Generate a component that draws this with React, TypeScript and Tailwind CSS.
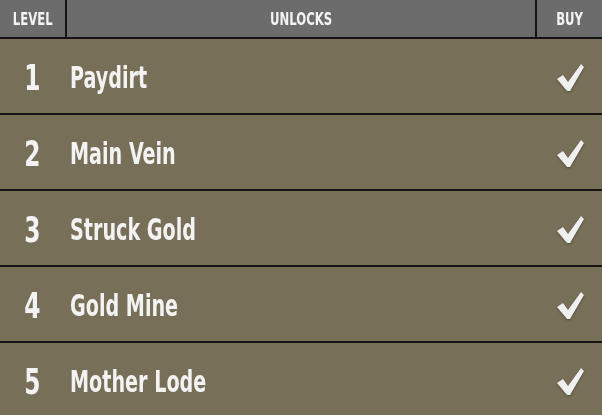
import React from "react";

const rows = [
  { level: 1, name: "Paydirt" },
  { level: 2, name: "Main Vein" },
  { level: 3, name: "Struck Gold" },
  { level: 4, name: "Gold Mine" },
  { level: 5, name: "Mother Lode" },
];

const font = "font-['DejaVu_Sans_Condensed','DejaVu_Sans',sans-serif] font-bold";

function Check() {
  return (
    <svg width="28" height="30" viewBox="0 0 28 30" className="drop-shadow-[0_1px_1px_rgba(0,0,0,0.35)]">
      <polygon points="1,17 7,13 12,20 25,2 28,5 14,29 11,29" fill="#efefef" />
    </svg>
  );
}

export default function App() {
  return (
    <div className={`w-[602px] h-[415px] overflow-hidden bg-[#776f58] text-[#f3f3f3] ${font}`}>
      {/* Header */}
      <div className="grid grid-cols-[65px_2px_1fr_2px_65px] h-[39px] bg-[#6c6c6c] border-b-2 border-[#141414]">
        <div className="flex items-center justify-center text-[18px]">
          <span className="inline-block scale-x-[0.72]">LEVEL</span>
        </div>
        <div className="bg-[#141414]" />
        <div className="flex items-center justify-center text-[18px]">
          <span className="inline-block scale-x-[0.72]">UNLOCKS</span>
        </div>
        <div className="bg-[#141414]" />
        <div className="flex items-center justify-center text-[18px]">
          <span className="inline-block scale-x-[0.72]">BUY</span>
        </div>
      </div>

      {/* Rows */}
      {rows.map((r) => (
        <div
          key={r.level}
          className="grid grid-cols-[65px_1fr_65px] h-[76px] border-b-2 border-[#141414] items-center"
        >
          <div className="flex justify-center pt-[4px] text-[36px] leading-none">
            <span className="inline-block scale-x-[0.72]">{r.level}</span>
          </div>
          <div className="pl-[5px] pt-[4px] text-[30px] leading-none">
            <span className="inline-block scale-x-[0.71] origin-left whitespace-nowrap">{r.name}</span>
          </div>
          <div className="flex justify-center pt-[2px]">
            <Check />
          </div>
        </div>
      ))}
    </div>
  );
}
